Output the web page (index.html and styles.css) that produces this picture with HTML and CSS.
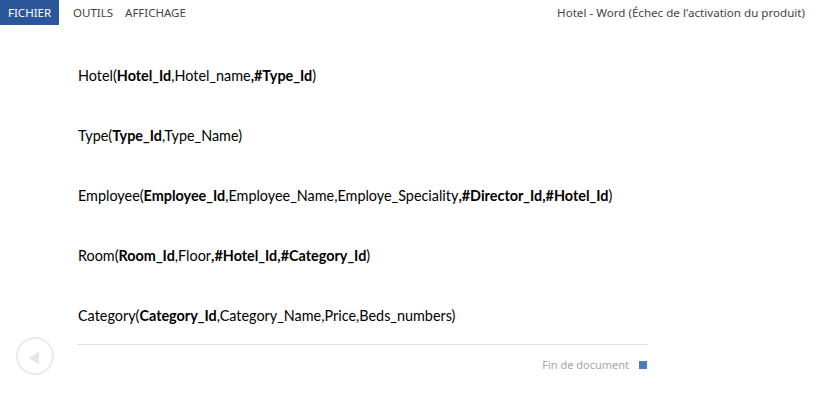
FILE: index.html
```html
<!DOCTYPE html>
<html lang="fr">
<head>
<meta charset="utf-8">
<title>Hotel - Word</title>
<link rel="stylesheet" href="styles.css">
</head>
<body>
<header class="topbar">
  <nav class="menu">
    <span class="tab active">FICHIER</span>
    <span class="tab">OUTILS</span>
    <span class="tab">AFFICHAGE</span>
  </nav>
  <div class="title">Hotel - Word (Échec de l'activation du produit)</div>
</header>
<main class="reader">
  <div class="side">
    <div class="back">
      <svg width="38" height="38" viewBox="0 0 38 38">
        <circle cx="19" cy="19" r="18" fill="none" stroke="#ececec" stroke-width="2"/>
        <polygon points="13,21 23,14.5 23,27.5" fill="#e6e6e6"/>
      </svg>
    </div>
  </div>
  <div class="doc">
    <p class="line">Hotel(<b>Hotel_Id</b>,Hotel_name<b>,#Type_Id</b>)</p>
    <p class="line">Type(<b>Type_Id</b>,Type_Name)</p>
    <p class="line">Employee(<b>Employee_Id</b>,Employee_Name,Employe_Speciality<b>,#Director_Id,#Hotel_Id</b>)</p>
    <p class="line">Room(<b>Room_Id</b>,Floor<b>,#Hotel_Id,#Category_Id</b>)</p>
    <p class="line last">Category(<b>Category_Id</b>,Category_Name,Price,Beds_numbers)</p>
    <div class="end">
      <span class="end-text">Fin de document</span>
      <span class="end-mark"></span>
    </div>
  </div>
</main>
</body>
</html>
```
FILE: styles.css
```css
html, body {
  margin: 0;
  padding: 0;
  background: #ffffff;
  width: 818px;
  height: 410px;
  overflow: hidden;
}
body {
  font-family: "Noto Sans", "Open Sans", sans-serif;
}
.topbar {
  display: flex;
  justify-content: space-between;
  align-items: flex-start;
  height: 25px;
}
.menu {
  display: flex;
}
.tab {
  font-size: 11.5px;
  color: #444444;
  height: 25px;
  line-height: 25px;
  padding: 0 6px;
}
.tab.active {
  background: #2b579a;
  color: #ffffff;
  padding: 0 8px;
  width: 43px;
  margin-right: 8px;
}
.title {
  font-size: 11.6px;
  color: #444444;
  line-height: 25px;
  padding-right: 13px;
}
.reader {
  display: flex;
}
.side {
  width: 78px;
  position: relative;
}
.back {
  position: absolute;
  left: 16px;
  top: 312px;
  width: 38px;
  height: 38px;
}
.doc {
  width: 570px;
  padding-top: 41px;
}
.line {
  margin: 0;
  height: 60px;
  line-height: 20px;
  font-family: "Lato", sans-serif;
  font-size: 14.4px;
  color: #000000;
}
.line.last {
  height: 38px;
}
.line b {
  font-weight: bold;
}
.end {
  border-top: 1px solid #dddddd;
  display: flex;
  justify-content: flex-end;
  align-items: center;
  padding-top: 12px;
}
.end-text {
  font-size: 11px;
  color: #a6a6a6;
  margin-right: 10px;
}
.end-mark {
  width: 8px;
  height: 8px;
  background: #4a7ebb;
  margin-right: 1px;
}
```
